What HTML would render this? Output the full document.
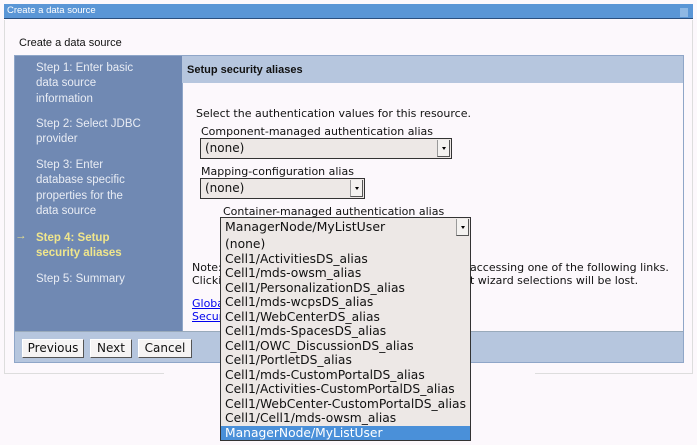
<!DOCTYPE html>
<html><head><style>
*{margin:0;padding:0;box-sizing:border-box}
body{width:697px;height:445px;background:#fcf8fc;position:relative;overflow:hidden;font-family:"DejaVu Sans",sans-serif}
.a{position:absolute}
.side{font-family:"Liberation Sans",sans-serif;font-size:11.5px;color:#e8ecf4;line-height:15.3px;white-space:nowrap}
.sel{position:absolute;background:#ede8e6;border:1px solid #333;font-size:12px;line-height:18px;padding-left:4px;color:#111}
.arr{position:absolute;right:1px;top:1px;width:13px;bottom:1px;background:#f4f2f0;border-left:1px solid #999;border-right:1px solid #555;border-bottom:1px solid #555}
.arr:after{content:"";position:absolute;left:4px;top:7px;border-left:2px solid transparent;border-right:2px solid transparent;border-top:3px solid #000}
.lbl{position:absolute;font-size:11px;color:#111}
.btn{position:absolute;top:339px;height:19px;background:#f6f4f4;border:1px solid #fff;border-right-color:#555;border-bottom-color:#555;font-size:12px;line-height:17px;text-align:center;color:#111}
.list div{height:14.5px;line-height:14.5px;font-size:12.3px;padding-left:4px;color:#111}
</style></head><body>
<div class="a" style="left:4px;top:4px;width:689px;height:15px;background:#5a96d6;border-bottom:1px solid #2a4f7f;color:#fff;font-family:'Liberation Sans',sans-serif;font-size:9.5px;line-height:14px;padding-left:3px">Create a data source</div>
<div class="a" style="left:680px;top:8px;width:8px;height:9px;background:#8fb8e4"></div>
<div class="a" style="left:4px;top:20px;width:1px;height:354px;background:#ddd"></div>
<div class="a" style="left:692px;top:20px;width:1px;height:354px;background:#ddd"></div>
<div class="a" style="left:4px;top:373px;width:160px;height:1px;background:#ddd"></div>
<div class="a" style="left:535px;top:373px;width:158px;height:1px;background:#ddd"></div>
<div class="a" style="left:19px;top:37px;font-family:'Liberation Sans',sans-serif;font-size:11px;color:#111">Create a data source</div>
<div class="a" style="left:14px;top:55px;width:670px;height:308px;border:1px solid #8fa6c8;background:#fcf8fc"></div>
<div class="a" style="left:15px;top:56px;width:167px;height:275px;background:#7089b3"></div>
<div class="a side" style="left:36px;top:61px">Step 1: Enter basic<br>data source<br>information</div>
<div class="a side" style="left:36px;top:117px">Step 2: Select JDBC<br>provider</div>
<div class="a side" style="left:36px;top:158px">Step 3: Enter<br>database specific<br>properties for the<br>data source</div>
<div class="a side" style="left:15px;top:229px;color:#f0e68c;font-weight:bold">→</div>
<div class="a side" style="left:36px;top:231px;color:#f0e68c;font-weight:bold">Step 4: Setup<br>security aliases</div>
<div class="a side" style="left:36px;top:272px">Step 5: Summary</div>
<div class="a" style="left:182px;top:56px;width:501px;height:27px;background:#b6c6de;font-family:'Liberation Sans',sans-serif;font-size:11px;font-weight:bold;line-height:29px;padding-left:5px;color:#111">Setup security aliases</div>
<div class="a" style="left:182px;top:83px;width:1px;height:248px;background:#8fa6c8"></div>
<div class="a" style="left:15px;top:331px;width:668px;height:31px;background:#b6c6de;border-top:1px solid #9ab"></div>
<div class="btn" style="left:22px;width:62px">Previous</div>
<div class="btn" style="left:90px;width:42px">Next</div>
<div class="btn" style="left:138px;width:54px">Cancel</div>
<div class="lbl" style="left:196px;top:107px">Select the authentication values for this resource.</div>
<div class="lbl" style="left:201px;top:125px">Component-managed authentication alias</div>
<div class="sel" style="left:200px;top:138px;width:252px;height:21px">(none)<div class="arr"></div></div>
<div class="lbl" style="left:201px;top:165px">Mapping-configuration alias</div>
<div class="sel" style="left:200px;top:178px;width:165px;height:21px">(none)<div class="arr"></div></div>
<div class="lbl" style="left:223px;top:205px">Container-managed authentication alias</div>
<div class="sel" style="left:220px;top:217px;width:251px;height:21px;font-size:12.5px">ManagerNode/MyListUser<div class="arr"></div></div>
<div class="lbl" style="left:192px;top:262px;line-height:12.5px">Note:<br>Clickin</div>
<div class="lbl" style="left:470px;top:262px;line-height:12.5px">accessing one of the following links.<br>t wizard selections will be lost.</div>
<div class="lbl" style="left:192px;top:298px;line-height:12.5px;color:#00e;text-decoration:underline">Globa<br>Secur</div>
<div class="a list" style="left:220px;top:237px;width:251px;height:204px;background:#ede8e6;border:1px solid #333;border-top:0">
<div>(none)</div><div>Cell1/ActivitiesDS_alias</div><div>Cell1/mds-owsm_alias</div><div>Cell1/PersonalizationDS_alias</div><div>Cell1/mds-wcpsDS_alias</div><div>Cell1/WebCenterDS_alias</div><div>Cell1/mds-SpacesDS_alias</div><div>Cell1/OWC_DiscussionDS_alias</div><div>Cell1/PortletDS_alias</div><div>Cell1/mds-CustomPortalDS_alias</div><div>Cell1/Activities-CustomPortalDS_alias</div><div>Cell1/WebCenter-CustomPortalDS_alias</div><div>Cell1/Cell1/mds-owsm_alias</div><div style="background:#4a90d9;color:#fff">ManagerNode/MyListUser</div>
</div>
</body></html>
